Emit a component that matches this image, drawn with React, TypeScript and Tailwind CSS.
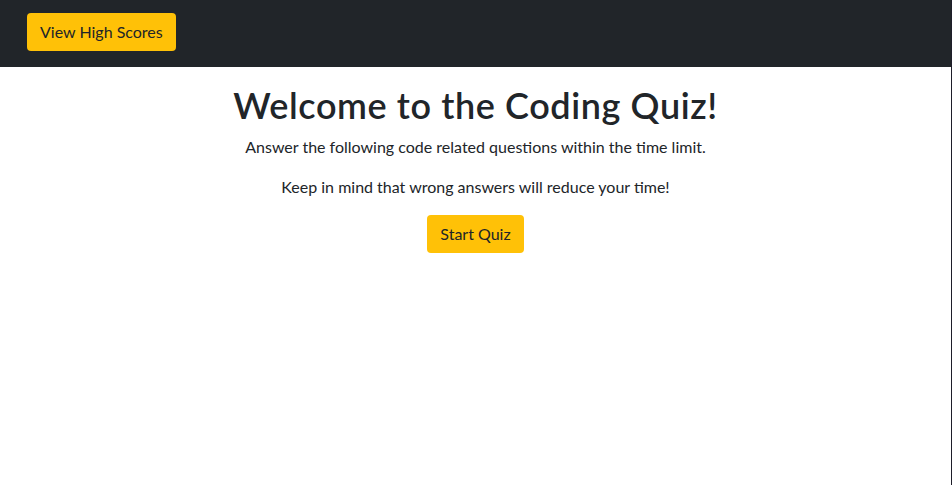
export default function App() {
  const font = { fontFamily: 'Lato, "Noto Sans", sans-serif' };
  return (
    <div className="flex h-[485px] w-[952px] bg-white text-[#212529]" style={font}>
      <div className="flex min-w-0 flex-1 flex-col">
        <nav className="flex h-[67px] items-start bg-[#212529] pl-[27px] pt-[13px]">
          <button className="h-[38px] rounded-[4px] bg-[#ffc107] px-[13px] text-[16px] leading-[24px] text-[#212529]">
            View High Scores
          </button>
        </nav>
        <main className="flex flex-col items-center pt-[16px] text-center">
          <h1 className="mb-[8px] text-[36px] font-semibold leading-[44px] tracking-[0.6px]">Welcome to the Coding Quiz!</h1>
          <p className="mb-[16px] text-[16px] leading-[24px]">
            Answer the following code related questions within the time limit.
          </p>
          <p className="mb-[16px] text-[16px] leading-[24px]">Keep in mind that wrong answers will reduce your time!</p>
          <button className="h-[38px] rounded-[4px] bg-[#ffc107] px-[13px] text-[16px] leading-[24px] text-[#212529]">
            Start Quiz
          </button>
        </main>
      </div>
      <div className="w-px bg-[#1e1e2a]" />
    </div>
  );
}
